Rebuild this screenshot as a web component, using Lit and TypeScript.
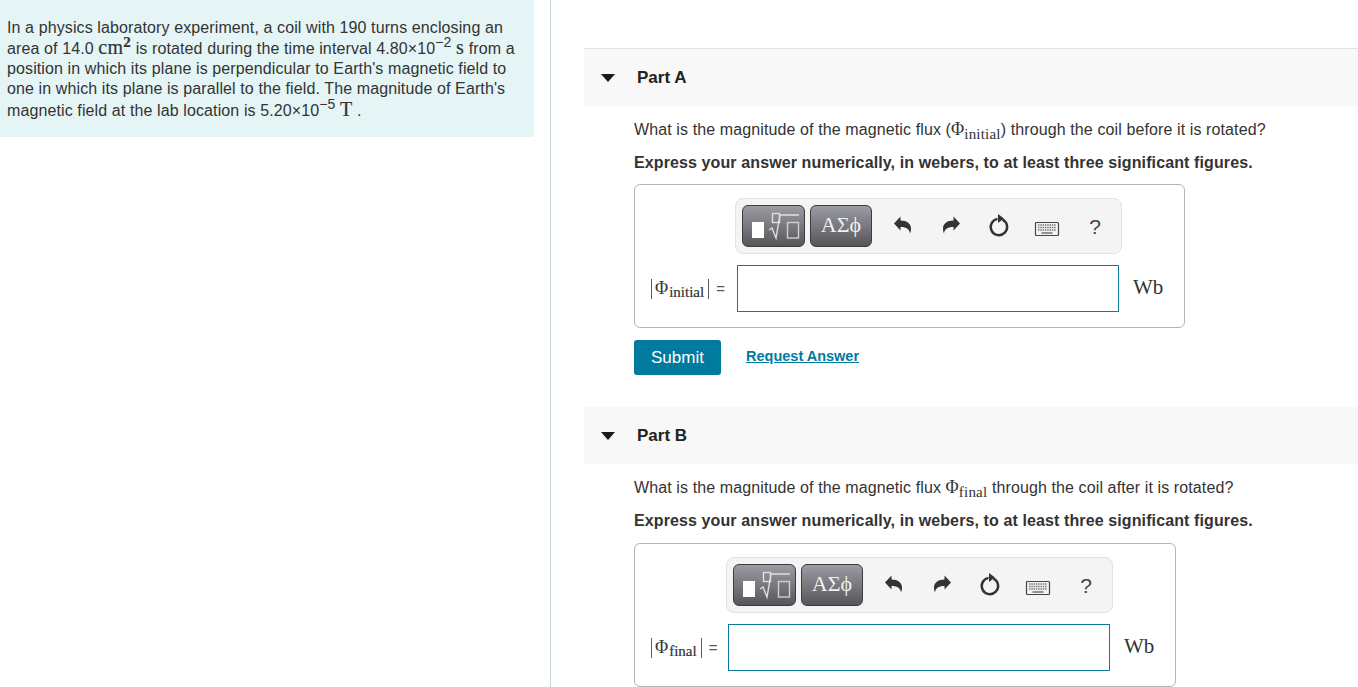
import { LitElement, html, css, svg } from "lit";
import { customElement, property } from "lit/decorators.js";

const undoPath = "M0 8.5 L6.5 1.5 V5.5 C13 5.5 17 9 17 13.5 C17 15.5 16.5 17.5 16 18.5 C15.5 14.5 13 12 6.5 12 V15.5 Z";

@customElement("answer-part")
class AnswerPart extends LitElement {
  @property() name = "";
  @property() sub = "";
  @property({ type: Number }) labelWidth = 87;
  @property({ type: Boolean }) submit = false;

  static styles = css`
    :host {
      display: block;
    }
    .head {
      display: flex;
      align-items: center;
      height: 57px;
      background: #f8f8f8;
      font-weight: bold;
      font-size: 17px;
      color: #222;
    }
    .caret {
      width: 0;
      height: 0;
      margin-left: 17px;
      margin-right: 22px;
      border-left: 7px solid transparent;
      border-right: 7px solid transparent;
      border-top: 8px solid #1a1a1a;
    }
    .body {
      padding: 13px 0 0 50px;
    }
    .line {
      margin: 0;
      font-size: 16px;
      line-height: 20px;
      letter-spacing: 0.11px;
      color: #333;
    }
    .strong {
      margin-top: 13px;
      font-weight: bold;
    }
    .box {
      display: inline-grid;
      grid-template-columns: auto 382px auto;
      grid-template-rows: 56px 47px;
      row-gap: 11px;
      margin-top: 12px;
      padding: 13px 21px 15px 15px;
      border: 1px solid #b4b4b4;
      border-radius: 6px;
    }
    :host([submit]) .box {
      margin-top: 11px;
    }
    .tools {
      grid-column: 2;
      grid-row: 1;
      display: flex;
      align-items: center;
      box-sizing: border-box;
      width: 387px;
      margin-left: -2px;
      padding-left: 6px;
      background: #f4f4f4;
      border: 1px solid #e2e2e2;
      border-radius: 8px;
    }
    .tool-btn {
      display: flex;
      align-items: center;
      justify-content: center;
      box-sizing: border-box;
      height: 42px;
      margin-right: 5px;
      padding: 0;
      border: 1px solid #3c3c3c;
      border-radius: 6px;
      background: linear-gradient(#9b9ba3, #56565a);
    }
    .tool-btn.tpl {
      width: 63px;
    }
    .tool-btn.sym {
      width: 62px;
      padding-bottom: 2px;
      color: #f0f0f0;
      font-family: "Liberation Serif", serif;
      font-size: 22px;
    }
    .icons {
      display: flex;
      margin: 2px 0 0 2px;
    }
    .icon {
      display: flex;
      align-items: center;
      justify-content: center;
      width: 48px;
      height: 30px;
      color: #333;
    }
    .help {
      padding-top: 2px;
      font-size: 21px;
      color: #444;
    }
    .keys {
      padding-top: 4px;
    }
    .label {
      grid-column: 1;
      grid-row: 2;
      display: flex;
      align-items: center;
      box-sizing: border-box;
      padding-left: 1px;
      font-family: "Liberation Serif", serif;
      font-size: 18px;
      color: #333;
    }
    .bar {
      width: 1px;
      height: 20px;
      background: #5c5c5c;
    }
    .label b {
      font-weight: normal;
      padding-left: 3px;
    }
    .label sub {
      font-size: 15px;
      line-height: 0;
      padding: 6px 4px 0 1px;
      -webkit-text-stroke: 0.2px #333;
    }
    .eq {
      padding-left: 7px;
      font-family: "Liberation Sans", sans-serif;
      font-size: 15px;
      color: #555;
    }
    .field {
      grid-column: 2;
      grid-row: 2;
      box-sizing: border-box;
      border: 1px solid #0b7a9b;
      background: #fff;
    }
    .unit {
      grid-column: 3;
      grid-row: 2;
      display: flex;
      align-items: center;
      padding: 0 0 3px 14px;
      font-family: "Liberation Serif", serif;
      font-size: 21px;
      color: #333;
    }
    .actions {
      display: flex;
      align-items: center;
      gap: 25px;
      margin-top: 12px;
    }
    .submit {
      width: 87px;
      height: 35px;
      padding: 0;
      border: 0;
      border-radius: 3px;
      background: #007a9e;
      color: #fff;
      font-family: "Liberation Sans", sans-serif;
      font-size: 17px;
    }
    .request {
      margin-bottom: 3px;
      color: #007a9e;
      font-size: 14.5px;
      font-weight: bold;
      text-decoration: underline;
    }
  `;

  renderIcons() {
    return html`<div class="icons">
      <span class="icon"><svg width="18" height="20" viewBox="0 0 18 20"><path d=${undoPath} fill="#333"></path></svg></span>
      <span class="icon"><svg width="18" height="20" viewBox="0 0 18 20"><path d=${undoPath} fill="#333" transform="matrix(-1 0 0 1 18 0)"></path></svg></span>
      <span class="icon"><svg width="24" height="26" viewBox="0 0 24 26">
        <path d="M15.5 7.6 A8.2 8.2 0 1 1 10.5 6.9" fill="none" stroke="#333" stroke-width="2.4"></path>
        <path d="M11 2 L17 6.5 L11 11 Z" fill="#333"></path>
      </svg></span>
      <span class="icon keys"><svg width="26" height="16" viewBox="0 0 26 16">
        <rect x="1.5" y="1.5" width="23" height="13" rx="1" fill="#f4f4f4" stroke="#444" stroke-width="1.2"></rect>
        ${[4, 6.5, 9].map((y) => svg`<path d="M4 ${y} H22" stroke="#777" stroke-width="1.4" stroke-dasharray="1.5 0.8"></path>`)}
        <path d="M7.5 12 H18.5" stroke="#666" stroke-width="1.4"></path>
      </svg></span>
      <span class="icon help">?</span>
    </div>`;
  }

  render() {
    return html`
      <div class="head"><span class="caret"></span>${this.name}</div>
      <div class="body">
        <p class="line"><slot></slot></p>
        <p class="line strong">Express your answer numerically, in webers, to at least three significant figures.</p>
        <div class="box">
          <div class="tools">
            <button class="tool-btn tpl">
              <svg width="61" height="40" viewBox="1 1 61 40">
                <rect x="10" y="17" width="12" height="16" fill="#fff"></rect>
                <rect x="30.5" y="8.5" width="7" height="9" fill="none" stroke="#e0e0e0" stroke-width="1.4"></rect>
                <path d="M27 25 L30 23 L34 33 L38 10 H57" fill="none" stroke="#e0e0e0" stroke-width="1.4"></path>
                <rect x="45.5" y="17.5" width="11" height="15.5" fill="none" stroke="#d0d0d0" stroke-width="1.4"></rect>
              </svg>
            </button>
            <button class="tool-btn sym">ΑΣϕ</button>
            ${this.renderIcons()}
          </div>
          <div class="label" style="width: ${this.labelWidth}px">
            <span class="bar"></span><b>Φ</b><sub>${this.sub}</sub><span class="bar"></span><span class="eq">=</span>
          </div>
          <div class="field"></div>
          <div class="unit">Wb</div>
        </div>
        ${this.submit
          ? html`<div class="actions">
              <button class="submit">Submit</button>
              <span class="request">Request Answer</span>
            </div>`
          : ""}
      </div>
    `;
  }
}

@customElement("app-root")
class AppRoot extends LitElement {
  static styles = css`
    :host {
      display: grid;
      grid-template-columns: 551px 1fr;
      height: 687px;
      overflow: hidden;
      font-family: "Liberation Sans", Arial, sans-serif;
      color: #333;
    }
    .left {
      border-right: 1px solid #c8d6de;
    }
    .intro {
      box-sizing: border-box;
      width: 534px;
      height: 137px;
      padding: 18px 16px 0 7px;
      background: #e5f5f6;
      font-size: 16px;
      line-height: 20px;
      letter-spacing: 0.11px;
    }
    .intro p {
      margin: 0;
    }
    .m {
      font-family: "Liberation Serif", serif;
      font-size: 20px;
      line-height: 17px;
      letter-spacing: 0.3px;
      -webkit-text-stroke: 0.2px #333;
    }
    sup {
      font-family: "Liberation Sans", sans-serif;
      font-size: 14px;
      line-height: 8px;
      vertical-align: 7px;
    }
    sup.tall {
      line-height: 11px;
    }
    sup.b {
      font-family: "Liberation Serif", serif;
      font-size: 15px;
      font-weight: bold;
    }
    .right {
      padding: 48px 0 0 33px;
      min-width: 0;
    }
    .rule {
      border-top: 1px solid #e2e2e2;
    }
    .gap {
      margin-top: 32px;
    }
    .phi {
      font-family: "Liberation Serif", serif;
      font-size: 18px;
    }
    .phi sub {
      font-size: 15px;
      line-height: 0;
      vertical-align: -4px;
      letter-spacing: 0.2px;
    }
  `;

  render() {
    return html`
      <div class="left">
        <div class="intro">
          <p>
            In a physics laboratory experiment, a coil with 190 turns enclosing an area of 14.0
            <span class="m">cm<sup class="b">2</sup></span> is rotated during the time interval
            4.80×10<sup>−2</sup> <span class="m">s</span> from a position in which its plane is
            perpendicular to Earth's magnetic field to one in which its plane is parallel to the
            field. The magnitude of Earth's magnetic field at the lab location is
            5.20×10<sup class="tall">−5</sup> <span class="m">T</span> .
          </p>
        </div>
      </div>
      <div class="right">
        <answer-part class="rule" name="Part A" sub="initial" labelWidth="87" submit>
          What is the magnitude of the magnetic flux (<span class="phi">Φ<sub>initial</sub></span>) through the coil before it is rotated?
        </answer-part>
        <answer-part class="gap" name="Part B" sub="final" labelWidth="78">
          What is the magnitude of the magnetic flux <span class="phi">Φ<sub>final</sub></span> through the coil after it is rotated?
        </answer-part>
      </div>
    `;
  }
}
